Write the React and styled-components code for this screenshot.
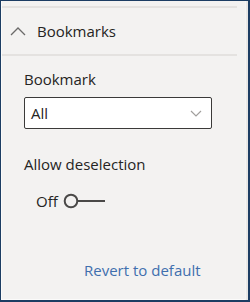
import React from "react";
import styled, { createGlobalStyle } from "styled-components";

const Global = createGlobalStyle`
  html, body { margin: 0; padding: 0; background: #f3f2f1; }
  * { box-sizing: border-box; }
`;

const Frame = styled.div`
  width: 250px;
  height: 302px;
  border-style: solid;
  border-color: #1c3d63;
  border-width: 1px 2px 2px 1px;
  background: #f3f2f1;
  display: flex;
  font-family: "Open Sans", "Liberation Sans", sans-serif;
  color: #252423;
`;

const Pane = styled.div`
  flex: 1;
  display: flex;
  flex-direction: column;
  border-left: 1px solid #fbfbfa;
  border-bottom: 1px solid #fbfbfa;
  padding-top: 5px;
`;

const Gutter = styled.div`
  width: 3px;
  background: #e9e8e6;
  border-left: 1px solid #f7f6f5;
`;

const Divider = styled.div`
  height: 2px;
  background: #e4e2e0;
  margin-right: 8px;
`;

const Header = styled.div`
  height: 46px;
  display: flex;
  align-items: center;
  gap: 11px;
  padding-left: 8px;
  font-size: 15px;
`;

const Body = styled.div`
  display: flex;
  flex-direction: column;
  padding: 13px 0 0 22px;
`;

const Label = styled.div`
  font-size: 15px;
  line-height: 20px;
  margin-top: ${(p) => p.$gap || 0}px;
`;

const Select = styled.div`
  margin-top: 8px;
  width: 188px;
  height: 32px;
  border: 1px solid #3b3a39;
  border-radius: 2px;
  background: #fff;
  display: flex;
  align-items: center;
  justify-content: space-between;
  padding: 0 9px 0 6px;
  font-size: 15px;
`;

const ToggleRow = styled.div`
  margin-top: 17px;
  margin-left: 12px;
  display: flex;
  align-items: center;
  gap: 5px;
  font-size: 15px;
`;

const Link = styled.a`
  margin-top: 49px;
  margin-left: 60px;
  font-size: 15px;
  color: #3f6fae;
  text-decoration: none;
`;

const Chevron = () => (
  <svg width="16" height="10" viewBox="0 0 16 10">
    <path d="M1 9 L8 2 L15 9" fill="none" stroke="#6b6a69" strokeWidth="1.3" />
  </svg>
);

const Toggle = () => (
  <svg width="43" height="16" viewBox="0 0 43 16">
    <circle cx="8" cy="8" r="6.3" fill="none" stroke="#4a4948" strokeWidth="2" />
    <line x1="14.3" y1="8" x2="42" y2="8" stroke="#4a4948" strokeWidth="2" />
  </svg>
);

export default function App() {
  return (
    <>
      <Global />
      <Frame>
        <Pane>
          <Divider />
          <Header>
            <Chevron />
            <span>Bookmarks</span>
          </Header>
          <Divider />
          <Body>
            <Label>Bookmark</Label>
            <Select>
              <span>All</span>
              <svg width="12" height="7" viewBox="0 0 12 7">
                <path d="M1 1 L6 6 L11 1" fill="none" stroke="#a19f9d" strokeWidth="1.2" />
              </svg>
            </Select>
            <Label $gap={25}>Allow deselection</Label>
            <ToggleRow>
              <span>Off</span>
              <Toggle />
            </ToggleRow>
            <Link href="#">Revert to default</Link>
          </Body>
        </Pane>
        <Gutter />
      </Frame>
    </>
  );
}
